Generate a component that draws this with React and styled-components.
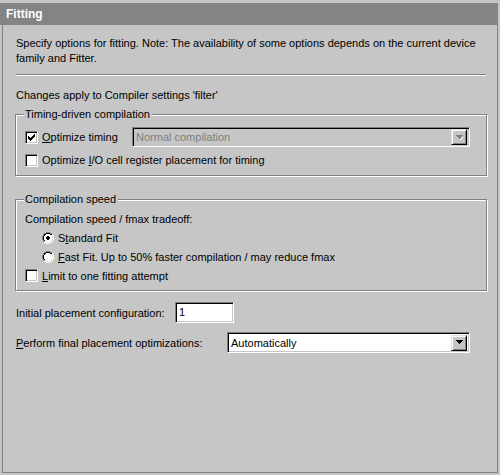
import React from "react";
import styled, { createGlobalStyle, css } from "styled-components";

const GlobalStyle = createGlobalStyle`
  html, body {
    margin: 0;
    padding: 0;
    background: #c6c6c6;
  }
  body {
    font-family: "Liberation Sans", Arial, sans-serif;
    font-size: 11px;
    color: #000;
  }
`;

const sunken = css`
  border: 1px solid;
  border-color: #808080 #fff #fff #808080;
  box-shadow: inset 1px 1px 0 #000, inset -1px -1px 0 #c6c6c6;
`;

const raised = css`
  border: 1px solid;
  border-color: #dfdfdf #000 #000 #dfdfdf;
  box-shadow: inset 1px 1px 0 #fff, inset -1px -1px 0 #808080;
`;

const Page = styled.div`
  width: 500px;
  height: 475px;
  padding-top: 3px;
  box-sizing: border-box;
  background: #c6c6c6;
`;

const Header = styled.div`
  height: 22px;
  width: 498px;
  background: #848484;
  color: #fff;
  font-weight: bold;
  font-size: 12px;
  line-height: 22px;
  padding-left: 6px;
  box-sizing: border-box;
`;

const Panel = styled.div`
  margin-left: 2px;
  width: 496px;
  height: 448px;
  box-sizing: border-box;
  border: 1px solid #808080;
  border-top: none;
  padding: 11px 10px 0 12px;
`;

const Text = styled.div`
  line-height: 15px;
  padding-left: 1px;
  margin-top: ${(p) => p.$top || 0}px;
`;

const Separator = styled.div`
  margin: 8px 0 0 1px;
  height: 1px;
  width: 470px;
  background: #808080;
  border-bottom: 1px solid #fff;
`;

const Group = styled.div`
  position: relative;
  width: 472px;
  box-sizing: border-box;
  border: 1px solid #808080;
  box-shadow: inset 1px 1px 0 #fff, 1px 1px 0 #fff;
  margin-top: ${(p) => p.$top}px;
  padding: ${(p) => p.$pad};
`;

const Caption = styled.span`
  position: absolute;
  top: -8px;
  left: 8px;
  padding: 0 2px 0 1px;
  line-height: 15px;
  background: #c6c6c6;
`;

const Row = styled.div`
  display: flex;
  align-items: center;
  height: ${(p) => p.$h || 20}px;
  margin-top: ${(p) => p.$top || 0}px;
  padding-left: ${(p) => p.$indent || 0}px;
`;

const Box = styled.span`
  ${sunken};
  width: 13px;
  height: 13px;
  box-sizing: border-box;
  background: #fff;
  display: inline-flex;
  align-items: center;
  justify-content: center;
  flex: none;
`;

const Radio = styled.span`
  width: 12px;
  height: 12px;
  flex: none;
  display: inline-block;
`;

const Label = styled.span`
  margin-left: ${(p) => p.$gap ?? 4}px;
  width: ${(p) => (p.$w ? `${p.$w}px` : "auto")};
  flex: none;
  color: ${(p) => (p.$disabled ? "#808080" : "#000")};
  white-space: nowrap;
`;

const FieldLabel = styled.span`
  padding-left: 1px;
  width: ${(p) => p.$w}px;
  flex: none;
  white-space: nowrap;
`;

const Select = styled.div`
  ${sunken};
  box-sizing: border-box;
  width: ${(p) => p.$w}px;
  height: ${(p) => p.$h || 20}px;
  background: ${(p) => (p.$disabled ? "#c6c6c6" : "#fff")};
  color: ${(p) => (p.$disabled ? "#808080" : "#000")};
  display: flex;
  align-items: center;
  justify-content: space-between;
  padding: 0 2px 0 3px;
`;

const DropButton = styled.span`
  ${raised};
  background: #c6c6c6;
  box-sizing: border-box;
  width: 16px;
  height: 16px;
  display: flex;
  align-items: center;
  justify-content: center;
`;

const TextInput = styled.div`
  ${sunken};
  box-sizing: border-box;
  width: 59px;
  height: 21px;
  background: #fff;
  padding: 2px 0 0 3px;
  line-height: 15px;
`;

const Arrow = ({ disabled }) => (
  <svg width="7" height="5" viewBox="0 0 7 5" shapeRendering="crispEdges">
    {disabled && <path d="M4 4h1v1H4zM5 3h1v1H5zM6 2h1v1H6z" fill="#fff" />}
    <path d="M0 0h7v1H0zM1 1h5v1H1zM2 2h3v1H2zM3 3h1v1H3z" fill={disabled ? "#808080" : "#000"} />
  </svg>
);

const Check = () => (
  <svg width="7" height="7" viewBox="0 0 7 7" shapeRendering="crispEdges">
    <path d="M6 0h1v3H6zM5 1h1v3H5zM4 2h1v3H4zM3 3h1v3H3zM2 4h1v3H2zM1 3h1v3H1zM0 2h1v3H0z" fill="#000" />
  </svg>
);

const RadioMark = ({ checked }) => (
  <Radio>
    <svg width="12" height="12" viewBox="0 0 12 12" shapeRendering="crispEdges">
      <path d="M4 0h4v1H4zM2 1h2v1H2zM8 1h2v1H8zM1 2h1v2H1zM0 4h1v4H0zM1 8h1v2H1z" fill="#808080" />
      <path d="M4 1h4v1H4zM2 2h2v1H2zM8 2h2v1H8zM2 3h1v1H2zM1 4h1v4H1zM2 8h1v1H2z" fill="#000" />
      <path d="M10 2h1v2h-1zM11 4h1v4h-1zM10 8h1v2h-1zM8 10h2v1H8zM2 10h2v1H2zM4 11h4v1H4z" fill="#fff" />
      <path d="M9 3h1v1H9zM10 4h1v4h-1zM9 8h1v1H9zM8 9h1v1H8zM3 9h1v1H3zM4 10h4v1H4z" fill="#dfdfdf" />
      <path d="M4 2h4v1H4zM3 3h6v1H3zM2 4h8v4H2zM3 8h6v1H3zM4 9h4v1H4z" fill="#fff" />
      {checked && <path d="M5 4h2v1H5zM4 5h4v2H4zM5 7h2v1H5z" fill="#000" />}
    </svg>
  </Radio>
);

const Checkbox = ({ checked }) => <Box>{checked && <Check />}</Box>;

export default function App() {
  return (
    <>
      <GlobalStyle />
      <Page>
        <Header>Fitting</Header>
        <Panel>
          <Text>
            Specify options for fitting. Note: The availability of some options depends on the current device
            <br />
            family and Fitter.
          </Text>
          <Separator />
          <Text $top={12}>Changes apply to Compiler settings 'filter'</Text>

          <Group $top={11} $pad="12px 15px 5px 9px">
            <Caption>Timing-driven compilation</Caption>
            <Row>
              <Checkbox checked />
              <Label $w={90}>
                <u>O</u>ptimize timing
              </Label>
              <Select $w={338} $disabled>
                <span>Normal compilation</span>
                <DropButton>
                  <Arrow disabled />
                </DropButton>
              </Select>
            </Row>
            <Row $top={3}>
              <Checkbox />
              <Label>
                Optimize <u>I</u>/O cell register placement for timing
              </Label>
            </Row>
          </Group>

          <Group $top={23} $pad="9px 15px 5px 9px">
            <Caption>Compilation speed</Caption>
            <Row $h={19}>Compilation speed / fmax tradeoff:</Row>
            <Row $h={19} $indent={17}>
              <RadioMark checked />
              <Label $gap={4}>
                S<u>t</u>andard Fit
              </Label>
            </Row>
            <Row $h={19} $indent={17}>
              <RadioMark />
              <Label $gap={4}>
                <u>F</u>ast Fit. Up to 50% faster compilation / may reduce fmax
              </Label>
            </Row>
            <Row $h={19}>
              <Checkbox />
              <Label>
                <u>L</u>imit to one fitting attempt
              </Label>
            </Row>
          </Group>

          <Row $h={21} $top={11}>
            <FieldLabel $w={159}>Initial placement configuration:</FieldLabel>
            <TextInput>1</TextInput>
          </Row>
          <Row $h={21} $top={9}>
            <FieldLabel $w={211}>
              <u>P</u>erform final placement optimizations:
            </FieldLabel>
            <Select $w={243} $h={21}>
              <span>Automatically</span>
              <DropButton>
                <Arrow />
              </DropButton>
            </Select>
          </Row>
        </Panel>
      </Page>
    </>
  );
}
